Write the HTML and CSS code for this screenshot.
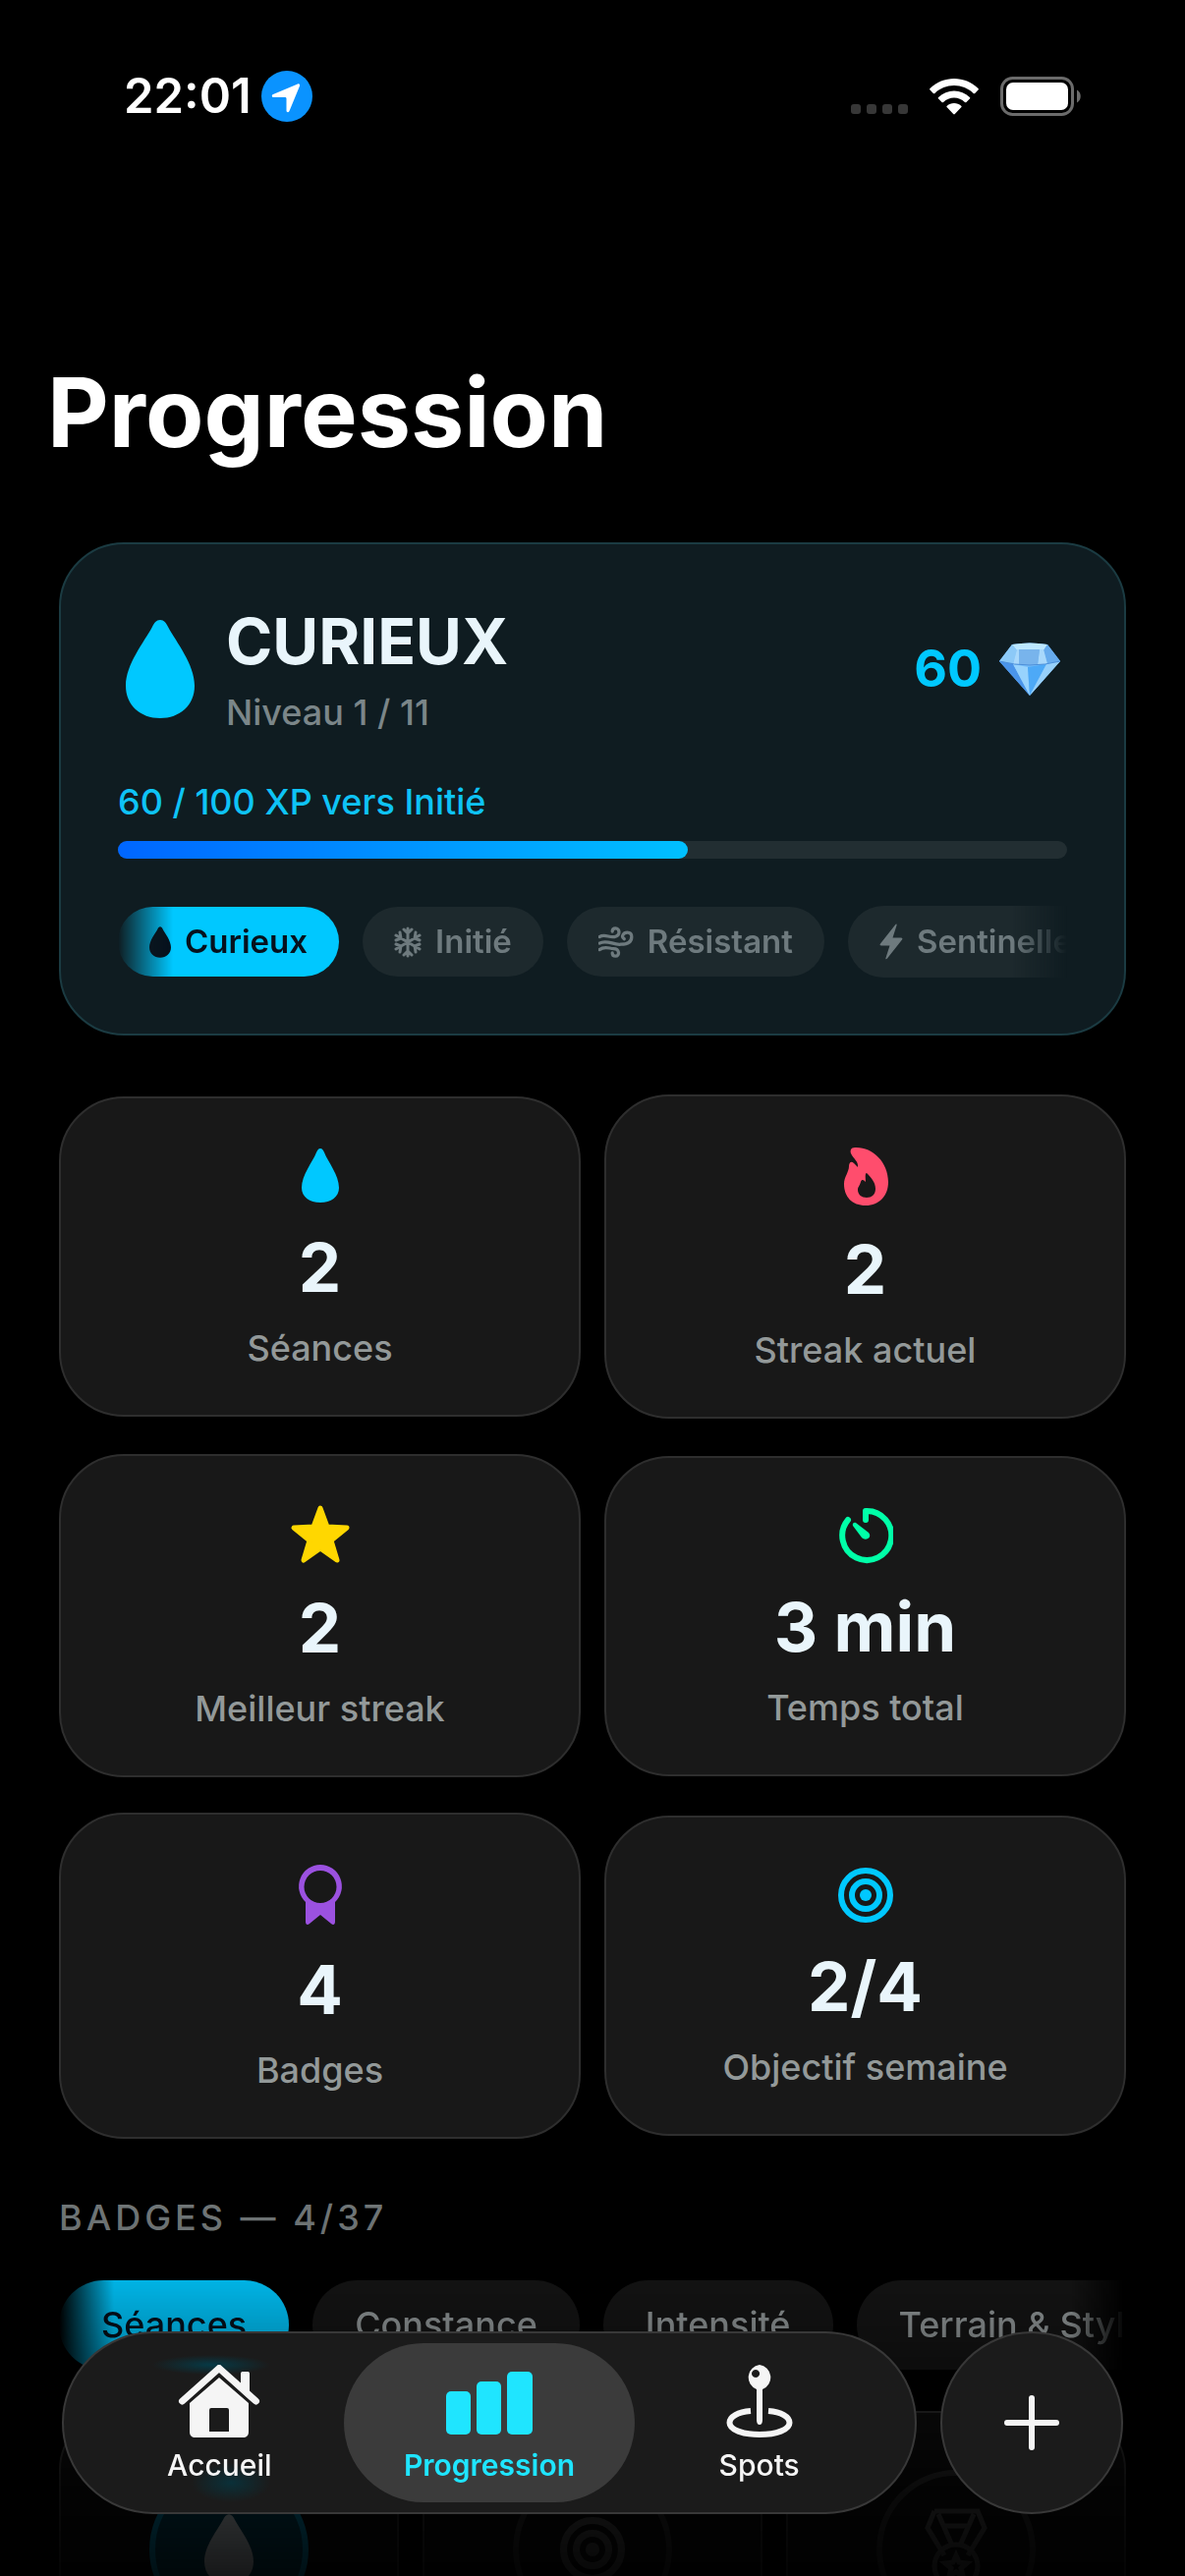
FILE: index.html
```html
<!DOCTYPE html>
<html lang="fr">
<head>
  <meta charset="UTF-8">
  <meta name="viewport" content="width=device-width, initial-scale=1.0">
  <title>Progression</title>

  <link rel="stylesheet" href="styles.css">
</head>
<body>

  <!-- Shared icons -->
  <svg class="sprite" aria-hidden="true">
    <symbol id="drop" viewBox="0 0 70 100">
      <path d="M35 0c-4 0-6 3-8 7C19 22 0 45 0 67c0 20 15 33 35 33s35-13 35-33C70 45 51 22 43 7c-2-4-4-7-8-7z"/>
    </symbol>
    <symbol id="target" viewBox="0 0 56 56">
      <circle cx="28" cy="28" r="25" fill="none" stroke="currentColor" stroke-width="6"/>
      <circle cx="28" cy="28" r="14" fill="none" stroke="currentColor" stroke-width="6"/>
      <circle cx="28" cy="28" r="6"/>
    </symbol>
  </svg>

  <div class="screen">
    <header class="status-bar">
      <div class="status-left">
        <span class="time">22:01</span>
        <svg class="location" viewBox="0 0 52 52">
          <circle cx="26" cy="26" r="26" fill="#0a93ff"/>
          <path d="M37 13.500c1.500-.600 2.600.500 2 2L28.500 41c-.800 1.800-3 1.500-3-.500V28.500c0-1-.500-1.500-1.500-1.500H12.500c-2 0-2.300-2.200-.500-3z" fill="#fff"/>
        </svg>
      </div>
      <div class="status-right">
        <svg class="signal" viewBox="0 0 58 10">
          <rect width="10" height="10" rx="3"/>
          <rect x="16" width="10" height="10" rx="3"/>
          <rect x="32" width="10" height="10" rx="3"/>
          <rect x="48" width="10" height="10" rx="3"/>
        </svg>
        <svg class="wifi" viewBox="0 0 50 38">
          <path d="M25 1c9 0 18 3.500 24.500 10 .6.600.6 1 0 1.600l-3.300 3.300c-.6.600-1 .6-1.600 0C39.300 10.800 32.300 8 25 8S10.700 10.800 5.400 15.900c-.6.600-1 .6-1.600 0L.5 12.600c-.6-.6-.6-1 0-1.600C7 4.500 16 1 25 1z"/>
          <path d="M25 13.500c6 0 11.500 2.300 15.900 6.400.6.600.6 1.100 0 1.700l-3.400 3.300c-.6.600-1 .6-1.600 0-3-2.800-6.800-4.400-10.900-4.400s-7.900 1.600-10.900 4.400c-.6.600-1 .6-1.600 0l-3.400-3.300c-.6-.6-.6-1.100 0-1.700 4.400-4.100 9.900-6.400 15.900-6.400z"/>
          <path d="M25 26c2.700 0 5.200 1 7.200 2.700.6.500.6 1 0 1.600l-6.400 6.800c-.6.600-1 .6-1.600 0l-6.400-6.800c-.6-.6-.6-1.100 0-1.600 2-1.700 4.500-2.700 7.200-2.700z"/>
        </svg>
        <svg class="battery" viewBox="0 0 82 40">
          <rect x="1.500" y="1.500" width="72" height="37" rx="11" fill="none" stroke="#6b6b6b" stroke-width="3"/>
          <rect x="6" y="6" width="63" height="28" rx="7" fill="#fff"/>
          <path d="M78 13.500c5 2.500 5 10.500 0 13z" fill="#6b6b6b"/>
        </svg>
      </div>
    </header>

    <h1 class="title">Progression</h1>

    <main class="content">
      <section class="level-card">
        <div class="level-header">
          <svg class="level-icon"><use href="#drop"/></svg>
          <div class="level-text">
            <h2 class="level-name">CURIEUX</h2>
            <p class="level-rank">Niveau 1 / 11</p>
          </div>
          <div class="points">
            60
            <svg class="diamond" viewBox="0 0 62 54">
              <path d="M13 2Q31-1 49 2L62 19 31 54 0 19z" fill="#75bdf9"/>
              <path d="M13 2Q31-1 49 2L45 8H18z" fill="#bce7ff"/>
              <path d="M13 2l5 6-4 13-14-2z" fill="#8cc9f7"/>
              <path d="M49 2l-4 6 4 13 13-2z" fill="#67abed"/>
              <path d="M18 7l-4 15h7l-1-15zM45 7l4 15H39l2-15z" fill="#a9d8fb"/>
              <path d="M20 7h21l-2 16H20z" fill="#78b4ec"/>
              <path d="M0 19l14 3 17 32z" fill="#4a94ea"/>
              <path d="M14 22l15 3 2 29z" fill="#98d3fd"/>
              <path d="M29 25l19-3-17 32z" fill="#4da9f7"/>
              <path d="M48 22l14-3-31 35z" fill="#97d0fb"/>
              <path d="M0 19q31 8 62 0" fill="none" stroke="#4d8fd9" stroke-width="1"/>
            </svg>
          </div>
        </div>

        <div class="xp">
          <p class="xp-label" id="xp-label">60 / 100 XP vers Initié</p>
          <div class="xp-track" role="progressbar" aria-labelledby="xp-label" aria-valuenow="60" aria-valuemin="0" aria-valuemax="100">
            <div class="xp-fill" style="width: 60%"></div>
          </div>
        </div>

        <ul class="levels">
          <li class="level level-active">
            <svg class="level-drop"><use href="#drop"/></svg>
            Curieux
          </li>
          <li class="level">
            <svg class="level-snow" viewBox="0 0 28 32">
              <path d="M14 2v28M2 9l24 14M26 9L2 23M10 3l4 4 4-4M10 29l4-4 4 4M2 14l5-2-1-6M26 18l-5 2 1 6M26 14l-5-2 1-6M2 18l5 2-1 6"/>
            </svg>
            Initié
          </li>
          <li class="level">
            <svg class="level-wind" viewBox="0 0 33 28">
              <path d="M1 9c5-3 9 1 14 0 6-1 5-8 1-8-2 0-3 1-3 3M1 15c7-4 13 2 20 1 7 0 10-3 10-7 0-3-2-4-4-4-4 0-6 4-3 6M1 21c5-4 9-1 13-1 6 0 6 7 2 7-2 0-3-1-3-3"/>
            </svg>
            Résistant
          </li>
          <li class="level">
            <svg class="level-bolt" viewBox="0 0 24 36">
              <path d="M16 1c1-1.500 2-1 1.500.500L13.500 14H22c1.500 0 1.800 1 1 2L8 35c-1 1.300-2 .8-1.500-.5L10.500 22H2c-1.500 0-1.800-1-1-2z"/>
            </svg>
            Sentinelle
          </li>
        </ul>
      </section>

      <section class="stats">
        <article class="stat">
          <svg class="stat-icon stat-drop" viewBox="0 0 56 66"><path d="M28 5c-2 0-3 2-4 4C20 19 9 32 9 45c0 9 8 15 19 15s19-6 19-15C47 32 36 19 32 9c-1-2-2-4-4-4z"/></svg>
          <strong class="stat-value">2</strong>
          <span class="stat-label">Séances</span>
        </article>
        <article class="stat">
          <svg class="stat-icon stat-flame" viewBox="0 0 56 70">
            <path d="M17 6c17-1 34 14 34 35 0 14-9 24-23 24S6 56 6 43c0-7 5-12 5-18 0-3 2-6 5-3l4 4c1-6-5-9-7-14-1-3 0-6 4-6zM29 32c-2 0-1 6-1 9-2-2-4-3-5 0-1 4-3 5-3 8 0 5 4 8 9 8s9-3 9-9c0-7-5-12-9-16z" fill-rule="evenodd"/>
          </svg>
          <strong class="stat-value">2</strong>
          <span class="stat-label">Streak actuel</span>
        </article>
        <article class="stat">
          <svg class="stat-icon stat-star" viewBox="0 0 62 69">
            <path d="M31 7l7 19 20 1-16 13 6 20-17-12-17 12 6-20L4 27l20-1z" stroke="currentColor" stroke-width="5" stroke-linejoin="round"/>
          </svg>
          <strong class="stat-value">2</strong>
          <span class="stat-label">Meilleur streak</span>
        </article>
        <article class="stat">
          <svg class="stat-icon stat-timer" viewBox="0 0 56 66">
            <path d="M10 17a25 25 0 1 0 18-9v9" fill="none" stroke="currentColor" stroke-width="6" stroke-linecap="round" stroke-linejoin="round"/>
            <path d="M18 20l13 10c4 5-3 9-7 5L15 23c-1-2 1-4 3-3z"/>
          </svg>
          <strong class="stat-value">3 min</strong>
          <span class="stat-label">Temps total</span>
        </article>
        <article class="stat">
          <svg class="stat-icon stat-ribbon" viewBox="0 0 56 72">
            <path d="M28 5a22 22 0 0 0-15 38v20c0 3 2 4 4 2l11-9 11 9c2 2 4 1 4-2V43A22 22 0 0 0 28 5zm0 6a16 16 0 1 1 0 33 16 16 0 1 1 0-33z" fill-rule="evenodd"/>
          </svg>
          <strong class="stat-value">4</strong>
          <span class="stat-label">Badges</span>
        </article>
        <article class="stat">
          <svg class="stat-icon stat-target"><use href="#target"/></svg>
          <strong class="stat-value">2/4</strong>
          <span class="stat-label">Objectif semaine</span>
        </article>
      </section>

      <section class="badges">
        <h2 class="section-title">BADGES — 4/37</h2>
        <div class="filters">
          <button class="filter filter-active" type="button">Séances</button>
          <button class="filter" type="button">Constance</button>
          <button class="filter" type="button">Intensité</button>
          <button class="filter" type="button">Terrain &amp; Style</button>
        </div>
        <div class="badge-list">
          <div class="badge badge-unlocked">
            <div class="badge-ring"><svg class="badge-drop"><use href="#drop"/></svg></div>
          </div>
          <div class="badge">
            <div class="badge-ring"><svg class="badge-icon"><use href="#target"/></svg></div>
          </div>
          <div class="badge">
            <div class="badge-ring">
              <svg class="badge-icon badge-medal" viewBox="0 0 64 84">
                <path d="M10 3h44L61 20 44 48M10 3L3 20l17 28M14 6l14 32M50 6L36 38M19 18h26"/>
                <circle cx="32" cy="59" r="22"/>
                <path d="M32 48l3 7 8 1-6 5 2 8-7-4-7 4 2-8-6-5 8-1z"/>
              </svg>
            </div>
          </div>
        </div>
      </section>
    </main>
  </div>

  <div class="bottom">
    <nav class="tabs">
      <a class="tab" href="#accueil">
        <svg class="tab-icon" viewBox="0 0 82 74">
          <path d="M3.500 37L41 3.500 78.500 37" fill="none" stroke="currentColor" stroke-width="7" stroke-linecap="round" stroke-linejoin="round"/>
          <path d="M63 9c0-1.500 1-2 2-2h5c1 0 2 .5 2 2v20l-9-8z"/>
          <path d="M41 13l30 26v29c0 4-2 6-6 6H17c-4 0-6-2-6-6V39zM31 46v22h20V46q0-2-2-2H33q-2 0-2 2z" fill-rule="evenodd"/>
        </svg>
        Accueil
      </a>
      <a class="tab tab-active" href="#progression">
        <svg class="tab-icon" viewBox="0 0 88 74">
          <rect y="27" width="25" height="44" rx="5"/>
          <rect x="31" y="17" width="25" height="54" rx="5"/>
          <rect x="62" y="7" width="26" height="64" rx="5"/>
        </svg>
        Progression
      </a>
      <a class="tab" href="#spots">
        <svg class="tab-icon" viewBox="0 0 68 74">
          <path d="M34 0a13 13 0 0 1 3 25v31c0 3-1 5-3 5s-3-2-3-5V25A13 13 0 0 1 34 0zm-4 5a4 4 0 1 0 .1 0z" fill-rule="evenodd"/>
          <path d="M25 47C12 48 3.500 53 3.500 59c0 7 13 12 30.500 12s30.500-5 30.500-12c0-6-8.500-11-21.500-12" fill="none" stroke="currentColor" stroke-width="6"/>
        </svg>
        Spots
      </a>
    </nav>
    <button class="add" type="button" aria-label="Ajouter">
      <svg class="add-icon" viewBox="0 0 56 56"><path d="M28 3v50M3 28h50"/></svg>
    </button>
  </div>

</body>
</html>
```

FILE: styles.css
```css
* {
  margin: 0;
  padding: 0;

  box-sizing: border-box;
  font-family: Inter, 'Liberation Sans', sans-serif;
}

body {
  background: #000;
  color: #fff;
}

ul {
  list-style: none;
}

svg {
  flex-shrink: 0;
  fill: currentColor;
}

.sprite {
  display: none;
}

.screen {
  height: 100vh;
  overflow-y: auto;
  scrollbar-width: none;
}

/* Status bar */
.status-bar {
  display: flex;
  align-items: center;
  justify-content: space-between;

  padding: 72px 106px 0 126px;
}

.status-left,
.status-right {
  display: flex;
  align-items: center;
}

.status-left {
  gap: 10px;
}

.status-right {
  gap: 22px;
}

.time {
  line-height: 52px;
  font-size: 49px;
  font-weight: 600;
}

.location {
  width: 52px;
  height: 52px;
}

.signal {
  align-self: flex-end;

  width: 58px;
  height: 10px;
  margin-bottom: 2px;

  color: #373737;
}

.wifi {
  width: 50px;
  height: 38px;
}

.battery {
  width: 82px;
  height: 40px;
}

.title {
  margin: 236px 48px 72px;

  line-height: 120px;
  font-size: 97px;
  font-weight: 700;
}

.content {
  display: flex;
  flex-direction: column;
  gap: 60px;

  padding: 0 60px 240px;
}

/* Level card */
.level-card {
  display: flex;
  flex-direction: column;
  gap: 48px;

  padding: 60px 58px 57px;

  background: #0f1c21;
  border: 2px solid #1b3b42;
  border-radius: 66px;
}

.level-header {
  display: flex;
  align-items: center;
  gap: 24px;
}

.level-icon {
  width: 86px;
  height: 100px;

  color: #00c8ff;
}

.level-text {
  display: flex;
  flex: 1;
  flex-direction: column;
  gap: 12px;
}

.level-name {
  color: #e9f5fb;

  line-height: 78px;
  font-size: 64px;
  font-weight: 700;
}

.level-rank {
  color: #7b8689;

  line-height: 43px;
  font-size: 36px;
  font-weight: 500;
}

.points {
  display: flex;
  align-items: center;
  gap: 18px;

  padding-right: 7px;

  color: #00c8ff;

  font-size: 52px;
  font-weight: 700;
}

.diamond {
  width: 62px;
  height: 54px;
}

.xp {
  display: flex;
  flex-direction: column;
  gap: 18px;
}

.xp-label {
  color: #0ec3f6;

  line-height: 43px;
  font-size: 36px;
  font-weight: 500;
}

.xp-track {
  height: 18px;

  background: #222e32;
  border-radius: 9px;
}

.xp-fill {
  height: 100%;

  background: linear-gradient(90deg, #0066ff, #00c0ff);
  border-radius: 9px;
}

.levels {
  display: flex;
  align-items: center;
  gap: 24px;

  overflow: hidden;
  mask-image: linear-gradient(90deg, transparent, #000 56px, #000 calc(100% - 56px), transparent);
}

.level {
  display: flex;
  flex-shrink: 0;
  align-items: center;
  gap: 14px;

  padding: 18px 32px;

  background: #1d292d;
  border-radius: 36px;

  color: #6e7a7e;

  line-height: 35px;
  font-size: 33px;
  font-weight: 600;
}

.level-active {
  background: #00c8ff;

  color: #06111d;
}

.level-drop {
  width: 22px;
  height: 32px;
}

.level-snow,
.level-wind {
  height: 32px;

  fill: none;
  stroke: currentColor;
  stroke-width: 3;
  stroke-linecap: round;
}

.level-snow {
  width: 28px;
}

.level-wind {
  width: 36px;
}

.level-bolt {
  width: 24px;
  height: 37px;
}

/* Stats */
.stats {
  display: grid;
  grid-template-columns: 1fr 1fr;
  align-items: center;
  gap: 36px 24px;
}

.stat {
  display: flex;
  flex-direction: column;
  align-items: center;
  gap: 18px;

  padding: 46px;

  background: #181818;
  border: 2px solid #2e2e2e;
  border-radius: 66px;
}

.stat-icon {
  width: 56px;
  height: 66px;
}

.stat-value {
  color: #e9f5fb;

  line-height: 85px;
  font-size: 69px;
  font-weight: 700;
}

.stat-label {
  color: #939999;

  line-height: 43px;
  font-size: 36px;
  font-weight: 500;
}

.stat-drop,
.stat-target {
  color: #00c8ff;
}

.stat-flame {
  height: 70px;

  color: #ff4d6d;
}

.stat-star {
  width: 62px;
  height: 69px;

  color: #ffd700;
}

.stat-timer {
  color: #00ffa8;
}

.stat-ribbon {
  height: 72px;

  color: #9b51e0;
}

/* Badges */
.section-title {
  color: #707677;

  line-height: 40px;
  font-size: 36px;
  font-weight: 500;
  letter-spacing: 4px;
}

.filters {
  display: flex;
  gap: 24px;

  margin-top: 44px;

  overflow: hidden;
  mask-image: linear-gradient(90deg, transparent, #000 56px, #000 calc(100% - 56px), transparent);
}

.filter {
  flex-shrink: 0;

  padding: 24px 43px;

  background: #151515;
  border: none;
  border-radius: 46px;

  color: #949a9b;

  line-height: 43px;
  font-size: 36px;
  font-weight: 500;
}

.filter-active {
  background: #00c8ff;

  color: #06111d;
}

.badge-list {
  display: grid;
  grid-template-columns: repeat(3, 1fr);
  gap: 24px;

  margin-top: 42px;
}

.badge {
  display: flex;
  justify-content: center;

  padding: 58px 0 180px;

  background: #111;
  border: 2px solid #333;
  border-radius: 60px;

  color: #555;
}

.badge-ring {
  display: flex;
  align-items: center;
  justify-content: center;

  width: 162px;
  height: 162px;

  border: 6px solid #333;
  border-radius: 50%;
}

.badge-unlocked .badge-ring {
  background: #00506a;
  border-color: #00a0d0;

  color: #e9f5fb;
}

.badge-drop {
  width: 50px;
  height: 78px;
}

.badge-icon {
  width: 66px;
  height: 84px;
}

.badge-medal {
  fill: none;
  stroke: currentColor;
  stroke-width: 5;
}

/* Floating tab bar, the content fades out behind it */
.bottom {
  position: fixed;
  right: 0;
  bottom: 0;
  left: 0;

  display: flex;
  gap: 24px;

  padding: 133px 63px 63px;

  background: linear-gradient(rgba(0, 0, 0, 0), rgba(0, 0, 0, 0.1) 80px, rgba(0, 0, 0, 0.25) 133px, rgba(0, 0, 0, 0.8) 300px, rgba(0, 0, 0, 0.9));
}

.tabs {
  display: flex;
  flex: 1;

  padding: 10px;

  background:
    radial-gradient(60px 10px at 150px 32px, #063a46, transparent),
    radial-gradient(40px 20px at 170px 152px, #0a3039, transparent),
    #1b1b1b;
  border: 2px solid #383838;
  border-radius: 93px;
}

.tab {
  display: flex;
  flex: 1;
  flex-direction: column;
  align-items: center;
  gap: 8px;

  padding: 22px 0 18px;

  border-radius: 81px;

  color: #f5f5f5;

  line-height: 40px;
  font-size: 30px;
  font-weight: 500;
  text-decoration: none;
}

/* Neighbouring tabs share some of their touch area */
.tab + .tab {
  margin-left: -22px;
}

.tab-active {
  background: #3b3b3b;

  color: #1fe5ff;

  font-weight: 600;
}

.tab-icon {
  width: 88px;
  height: 74px;
}

.add {
  display: flex;
  align-items: center;
  justify-content: center;

  width: 186px;
  height: 186px;

  background: #1b1b1b;
  border: 2px solid #383838;
  border-radius: 50%;

  color: #f5f5f5;
}

.add-icon {
  width: 56px;
  height: 56px;

  stroke: currentColor;
  stroke-width: 6;
  stroke-linecap: round;
}
```
